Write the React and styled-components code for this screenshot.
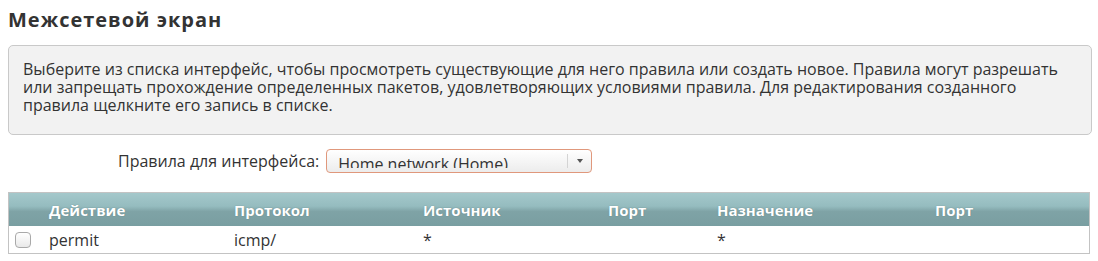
import React from "react";
import styled, { createGlobalStyle } from "styled-components";

const Global = createGlobalStyle`
  html, body { margin: 0; padding: 0; background: #fff; }
  body { font-family: "Open Sans", "DejaVu Sans", sans-serif; color: #333; }
`;

const Page = styled.div`
  padding: 0 8px;
  width: 1082px;
`;

const Title = styled.h1`
  margin: 0;
  padding-top: 8px;
  height: 45px;
  box-sizing: border-box;
  font-size: 20px;
  font-weight: 700;
  letter-spacing: 1px;
  line-height: 24px;
  color: #333;
`;

const InfoBox = styled.div`
  box-sizing: border-box;
  width: 1084px;
  height: 90px;
  background: #f2f2f2;
  border: 1px solid #c9c9c9;
  border-radius: 5px;
  padding: 14px 20px 0 14px;
  font-size: 16px;
  line-height: 18px;
  color: #333;
`;

const FilterRow = styled.div`
  display: flex;
  align-items: center;
  gap: 7px;
  margin-top: 14px;
  padding-left: 110px;
  height: 24px;
`;

const Label = styled.span`
  font-size: 16px;
  color: #333;
`;

const Select = styled.div`
  box-sizing: border-box;
  width: 266px;
  height: 24px;
  border: 1px solid #e0987c;
  border-radius: 4px;
  background: linear-gradient(#ffffff, #ececec);
  display: flex;
`;

const SelectText = styled.span`
  flex: 1;
  height: 18px;
  overflow: hidden;
  box-sizing: border-box;
  padding: 5px 0 0 11px;
  font-size: 16px;
  line-height: 18px;
  color: #333;
  white-space: nowrap;
`;

const SelectButton = styled.span`
  width: 23px;
  display: flex;
  align-items: center;
  justify-content: center;
  border-left: 1px solid #d4d4d4;
  margin: 4px 0;
`;

const Arrow = styled.span`
  width: 0;
  height: 0;
  border-left: 3px solid transparent;
  border-right: 3px solid transparent;
  border-top: 4px solid #555;
`;

const Table = styled.div`
  margin-top: 19px;
  width: 1082px;
  box-sizing: border-box;
  border: 1px solid #c3c3c3;
`;

const cols = "32px 185px 189px 185px 109px 218px 1fr";

const HeaderRow = styled.div`
  display: grid;
  grid-template-columns: ${cols};
  height: 33px;
  align-items: center;
  background: linear-gradient(#a4c8cb 0%, #95bcbf 40%, #7fa3a6 56%, #799ea1 100%);
`;

const HeadCell = styled.div`
  padding-left: 8px;
  font-size: 15px;
  font-weight: 700;
  color: #fff;
  text-shadow: 0 0 1px rgba(60, 90, 95, 0.6);
  white-space: nowrap;
`;

const Row = styled.div`
  display: grid;
  grid-template-columns: ${cols};
  height: 27px;
  align-items: center;
  background: #fff;
`;

const Cell = styled.div`
  padding-left: ${(p) => (p.$check ? "6px" : "8px")};
  font-size: 16px;
  color: #333;
  white-space: nowrap;
  display: flex;
  align-items: center;
`;

const Checkbox = styled.span`
  display: block;
  box-sizing: border-box;
  width: 16px;
  height: 16px;
  border: 1px solid #a9a9a9;
  border-radius: 4px;
  background: linear-gradient(#ffffff, #e9e9e9);
`;

const headers = ["", "Действие", "Протокол", "Источник", "Порт", "Назначение", "Порт"];
const rows = [["permit", "icmp/", "*", "", "*", ""]];

export default function App() {
  return (
    <>
      <Global />
      <Page>
        <Title>Межсетевой экран</Title>
        <InfoBox>
          Выберите из списка интерфейс, чтобы просмотреть существующие для него правила или создать новое. Правила могут разрешать или запрещать прохождение определенных пакетов, удовлетворяющих условиями правила. Для редактирования созданного правила щелкните его запись в списке.
        </InfoBox>
        <FilterRow>
          <Label>Правила для интерфейса:</Label>
          <Select>
            <SelectText>Home network (Home)</SelectText>
            <SelectButton>
              <Arrow />
            </SelectButton>
          </Select>
        </FilterRow>
        <Table>
          <HeaderRow>
            {headers.map((h, i) => (
              <HeadCell key={i}>{h}</HeadCell>
            ))}
          </HeaderRow>
          {rows.map((r, i) => (
            <Row key={i}>
              <Cell $check>
                <Checkbox />
              </Cell>
              {r.map((c, j) => (
                <Cell key={j}>{c}</Cell>
              ))}
            </Row>
          ))}
        </Table>
      </Page>
    </>
  );
}
